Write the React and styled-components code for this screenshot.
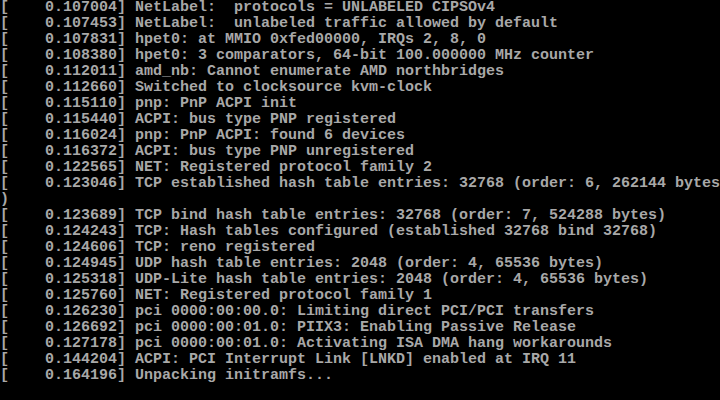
import React from 'react';
import styled, {createGlobalStyle} from "styled-components";

const GlobalStyle = createGlobalStyle`
  html, body {
    margin: 0;
    padding: 0;
    background: #000;
  }
`;

const StyledConsole = styled.div`
  width: 720px;
  height: 400px;
  background-color: #000;
  overflow: hidden;
  display: flex;
  flex-direction: column;
`;

const StyledLine = styled.div`
  font-family: "Liberation Mono", "DejaVu Sans Mono", monospace;
  font-size: 15px;
  font-weight: bold;
  line-height: 16px;
  height: 16px;
  white-space: pre;
  color: #a8a8a8;
`;

const LOG = [
    '[    0.107004] NetLabel:  protocols = UNLABELED CIPSOv4',
    '[    0.107453] NetLabel:  unlabeled traffic allowed by default',
    '[    0.107831] hpet0: at MMIO 0xfed00000, IRQs 2, 8, 0',
    '[    0.108380] hpet0: 3 comparators, 64-bit 100.000000 MHz counter',
    '[    0.112011] amd_nb: Cannot enumerate AMD northbridges',
    '[    0.112660] Switched to clocksource kvm-clock',
    '[    0.115110] pnp: PnP ACPI init',
    '[    0.115440] ACPI: bus type PNP registered',
    '[    0.116024] pnp: PnP ACPI: found 6 devices',
    '[    0.116372] ACPI: bus type PNP unregistered',
    '[    0.122565] NET: Registered protocol family 2',
    '[    0.123046] TCP established hash table entries: 32768 (order: 6, 262144 bytes',
    ')',
    '[    0.123689] TCP bind hash table entries: 32768 (order: 7, 524288 bytes)',
    '[    0.124243] TCP: Hash tables configured (established 32768 bind 32768)',
    '[    0.124606] TCP: reno registered',
    '[    0.124945] UDP hash table entries: 2048 (order: 4, 65536 bytes)',
    '[    0.125318] UDP-Lite hash table entries: 2048 (order: 4, 65536 bytes)',
    '[    0.125760] NET: Registered protocol family 1',
    '[    0.126230] pci 0000:00:00.0: Limiting direct PCI/PCI transfers',
    '[    0.126692] pci 0000:00:01.0: PIIX3: Enabling Passive Release',
    '[    0.127178] pci 0000:00:01.0: Activating ISA DMA hang workarounds',
    '[    0.144204] ACPI: PCI Interrupt Link [LNKD] enabled at IRQ 11',
    '[    0.164196] Unpacking initramfs...',
];

export default function App(){
    return (
        <StyledConsole>
            <GlobalStyle/>
            {LOG.map((line, i) => (
                <StyledLine key={i}>{line}</StyledLine>
            ))}
        </StyledConsole>
    );
}
